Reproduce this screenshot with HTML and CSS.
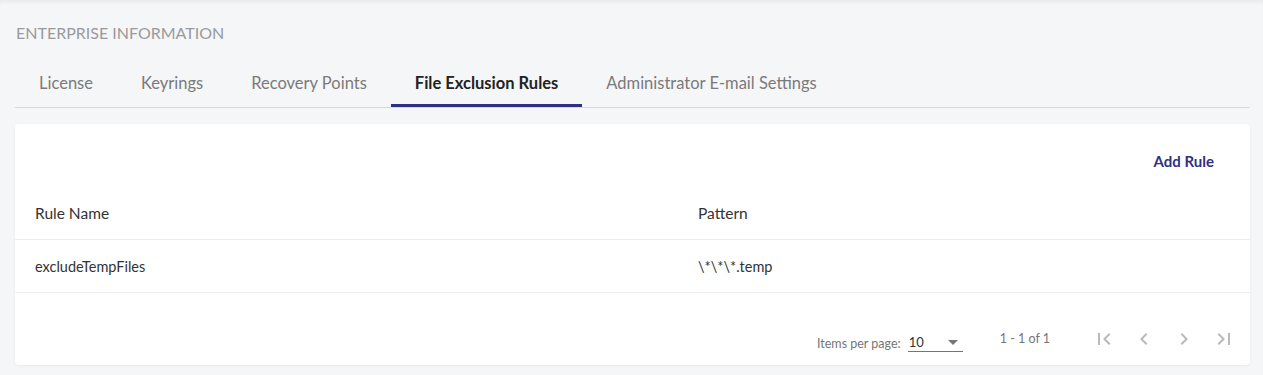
FILE: index.html
```html
<!DOCTYPE html>
<html lang="en">
<head>
    <meta charset="UTF-8">
    <meta name="viewport" content="width=device-width, initial-scale=1.0">
    <title>Enterprise Information</title>
    <link rel="stylesheet" href="styles.css">
</head>
<body>
    <div class="page">
        <h1 class="page-title">ENTERPRISE INFORMATION</h1>

        <nav class="tabs">
            <a href="#" class="tab">License</a>
            <a href="#" class="tab">Keyrings</a>
            <a href="#" class="tab">Recovery Points</a>
            <a href="#" class="tab active">File Exclusion Rules</a>
            <a href="#" class="tab">Administrator E-mail Settings</a>
        </nav>

        <div class="card">
            <div class="card-actions">
                <a href="#" class="add-rule">Add Rule</a>
            </div>

            <div class="table">
                <div class="row head">
                    <div class="cell name">Rule Name</div>
                    <div class="cell">Pattern</div>
                </div>
                <div class="row">
                    <div class="cell name">excludeTempFiles</div>
                    <div class="cell">\*\*\*.temp</div>
                </div>
            </div>

            <div class="paginator">
                <div class="page-size">
                    <span class="page-size-label">Items per page:</span>
                    <div class="page-select">
                        <span>10</span>
                        <span class="caret"></span>
                    </div>
                </div>
                <div class="range">1 - 1 of 1</div>
                <div class="page-buttons">
                    <button class="page-btn" title="First page">
                        <svg viewBox="0 0 24 24" width="24" height="24"><path d="M18.41 16.59L13.82 12l4.59-4.59L17 6l-6 6 6 6zM6 6h2v12H6z"/></svg>
                    </button>
                    <button class="page-btn" title="Previous page">
                        <svg viewBox="0 0 24 24" width="24" height="24"><path d="M15.41 7.41L14 6l-6 6 6 6 1.41-1.41L10.83 12z"/></svg>
                    </button>
                    <button class="page-btn" title="Next page">
                        <svg viewBox="0 0 24 24" width="24" height="24"><path d="M10 6L8.59 7.41 13.17 12l-4.58 4.59L10 18l6-6z"/></svg>
                    </button>
                    <button class="page-btn" title="Last page">
                        <svg viewBox="0 0 24 24" width="24" height="24"><path d="M5.59 7.41L10.18 12l-4.59 4.59L7 18l6-6-6-6zM16 6h2v12h-2z"/></svg>
                    </button>
                </div>
            </div>
        </div>
    </div>
</body>
</html>
```

FILE: styles.css
```css
* {
    box-sizing: border-box;
    margin: 0;
    padding: 0;
}

body {
    font-family: Lato, "Open Sans", Arial, sans-serif;
    background-color: #f5f6f8;
    color: #333;
    height: 100vh;
    overflow: hidden;
    box-shadow: inset 0 4px 4px -2px rgba(0, 0, 0, 0.06);
}

.page {
    padding: 24px 13px 0 15px;
}

.page-title {
    font-size: 16px;
    font-weight: 400;
    color: #9a9a9a;
    line-height: 18px;
    padding-left: 1px;
}

.tabs {
    display: flex;
    margin-top: 17px;
    border-bottom: 1px solid #d8d8d8;
}

.tab {
    padding: 3px 24px 0;
    height: 48px;
    line-height: 42px;
    font-size: 16.5px;
    color: #7a7a7a;
    text-decoration: none;
    border-bottom: 3px solid transparent;
}

.tab.active {
    color: #222;
    font-weight: 700;
    border-bottom-color: #2e3180;
}

.card {
    margin-top: 16px;
    background-color: #ffffff;
    border-radius: 4px;
    box-shadow: 0 1px 3px rgba(0, 0, 0, 0.06);
    height: 241px;
}

.card-actions {
    display: flex;
    justify-content: flex-end;
    padding: 28px 36px 0 0;
    height: 64px;
}

.add-rule {
    color: #2e3180;
    font-weight: 700;
    font-size: 15px;
    text-decoration: none;
}

.row {
    display: flex;
    height: 52px;
    align-items: center;
    border-bottom: 1px solid #eeeeee;
    font-size: 14.5px;
    color: #333;
}

.row.head {
    font-size: 15.5px;
    padding-bottom: 2px;
}

.row + .row {
    height: 53px;
}

.cell {
    padding-left: 20px;
}

.cell.name {
    width: 663px;
}

.paginator {
    display: flex;
    align-items: center;
    height: 92px;
    justify-content: flex-end;
    padding-right: 6px;
    font-size: 12.5px;
    color: #757575;
}

.page-size {
    display: flex;
    align-items: center;
}

.page-size-label {
    margin-top: 8px;
}

.page-select {
    margin-left: 7px;
    width: 55px;
    display: flex;
    justify-content: space-between;
    align-items: center;
    border-bottom: 1px solid #757575;
    color: #333;
    padding: 0 2px 1px 1px;
    margin-top: 8px;
    font-size: 13px;
}

.caret {
    width: 0;
    height: 0;
    border-left: 5px solid transparent;
    border-right: 5px solid transparent;
    border-top: 5px solid #757575;
    margin-right: 3px;
}

.range {
    margin-left: 37px;
    margin-right: 34px;
    margin-top: -2px;
}

.page-buttons {
    display: flex;
}

.page-btn {
    border: none;
    background: none;
    width: 40px;
    height: 24px;
    display: flex;
    justify-content: center;
    cursor: pointer;
}

.page-btn svg {
    fill: #b9b9b9;
    display: block;
}
```
